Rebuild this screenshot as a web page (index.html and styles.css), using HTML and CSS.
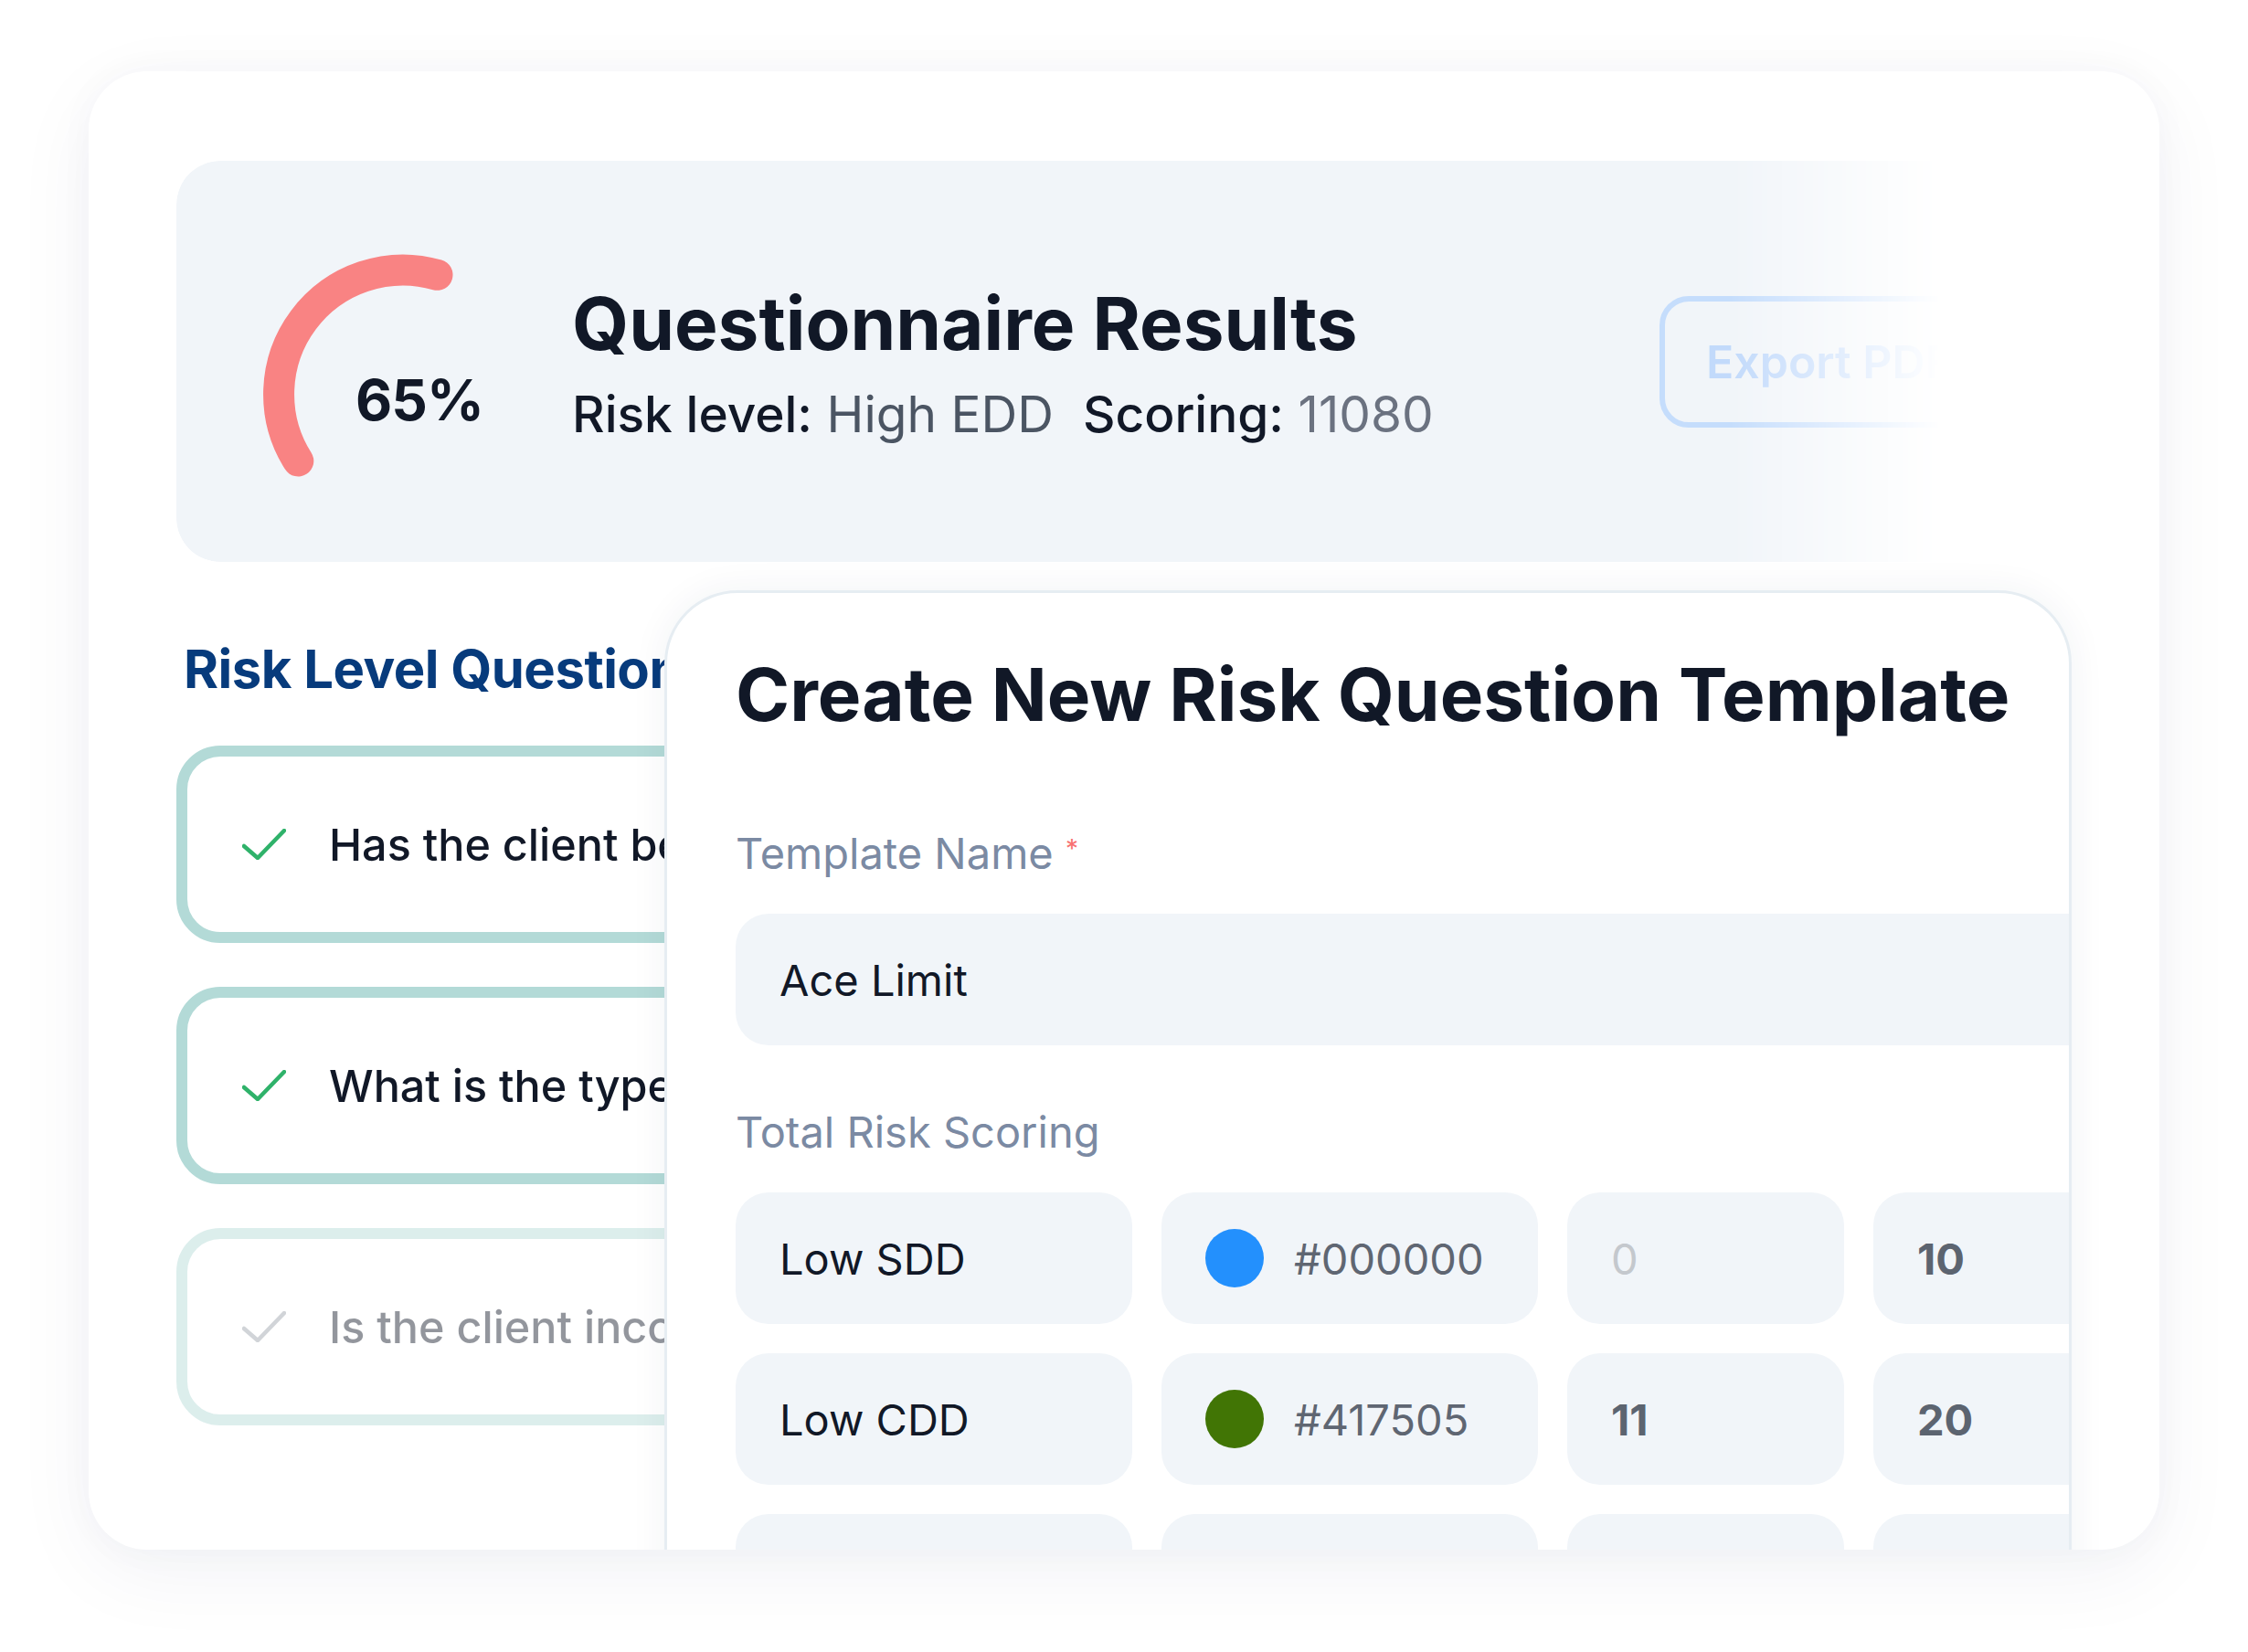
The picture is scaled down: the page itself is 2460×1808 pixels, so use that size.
FILE: index.html
```html
<!DOCTYPE html>
<html lang="en">
<head>
<meta charset="utf-8">
<title>Questionnaire Results</title>
<link rel="stylesheet" href="styles.css">
</head>
<body>
<div class="page">
  <div class="card">
    <section class="results">
      <div class="gauge">
        <svg class="gauge-svg" width="300" height="300" viewBox="0 0 300 300">
          <path d="M 37.3 258.5 A 136 136 0 0 1 189.5 54.8" fill="none" stroke="#f98383" stroke-width="34" stroke-linecap="round"/>
        </svg>
        <span class="gauge-value">65%</span>
      </div>
      <div class="summary">
        <h1 class="summary-title">Questionnaire Results</h1>
        <p class="summary-meta">
          <span class="meta-item"><span class="meta-key">Risk level:</span> <span class="meta-level">High EDD</span></span>
          <span class="meta-item"><span class="meta-key">Scoring:</span> <span class="meta-score">11080</span></span>
        </p>
      </div>
      <button class="export-btn" type="button">Export PDF</button>
    </section>

    <section class="body">
      <div class="questions">
        <h2 class="questions-title">Risk Level Questions</h2>
        <ul class="question-list">
          <li class="question">
            <svg class="check" width="48" height="34" viewBox="0 0 48 34"><polyline points="2,19 17,32 46,2" fill="none" stroke="#2fb26a" stroke-width="4.5" stroke-linecap="round" stroke-linejoin="round"/></svg>
            <span class="question-text">Has the client been subject to sanctions?</span>
          </li>
          <li class="question">
            <svg class="check" width="48" height="34" viewBox="0 0 48 34"><polyline points="2,19 17,32 46,2" fill="none" stroke="#2fb26a" stroke-width="4.5" stroke-linecap="round" stroke-linejoin="round"/></svg>
            <span class="question-text">What is the type of the client?</span>
          </li>
          <li class="question question-faded">
            <svg class="check" width="48" height="34" viewBox="0 0 48 34"><polyline points="2,19 17,32 46,2" fill="none" stroke="#9aa1a9" stroke-width="4.5" stroke-linecap="round" stroke-linejoin="round"/></svg>
            <span class="question-text">Is the client incorporated offshore?</span>
          </li>
        </ul>
      </div>

      <div class="modal">
        <h2 class="modal-title">Create New Risk Question Template</h2>
        <label class="field-label">Template Name <span class="required">*</span></label>
        <div class="text-input">Ace Limit</div>
        <div class="field-label field-label-spaced">Total Risk Scoring</div>
        <div class="score-grid">
          <div class="field">Low SDD</div>
          <div class="field field-color"><span class="swatch swatch-blue"></span><span class="hex">#000000</span></div>
          <div class="field field-placeholder">0</div>
          <div class="field field-num">10</div>

          <div class="field">Low CDD</div>
          <div class="field field-color"><span class="swatch swatch-green"></span><span class="hex">#417505</span></div>
          <div class="field field-num">11</div>
          <div class="field field-num">20</div>

          <div class="field">Medium CDD</div>
          <div class="field field-color"><span class="swatch swatch-orange"></span><span class="hex">#F5A623</span></div>
          <div class="field field-num">21</div>
          <div class="field field-num">30</div>
        </div>
      </div>
    </section>
  </div>
</div>
</body>
</html>
```

FILE: styles.css
```css
* {
  box-sizing: border-box;
}

html, body {
  margin: 0;
  padding: 0;
  background: #ffffff;
}

body {
  font-family: "Inter", "Noto Sans", sans-serif;
  color: #111827;
}

.page {
  padding: 78px 97px 0 97px;
  height: 1808px;
}

.card {
  height: 1618px;
  background: #ffffff;
  border-radius: 64px;
  overflow: hidden;
  padding: 98px 96px 0 96px;
  box-shadow: 0 24px 90px rgba(20, 40, 90, 0.055), 0 0 40px rgba(20, 40, 90, 0.03);
}

/* ---------- results panel ---------- */
.results {
  display: flex;
  align-items: center;
  height: 439px;
  padding: 0 71px 0 96px;
  background: #f1f5f9;
  border-radius: 48px;
  -webkit-mask-image: linear-gradient(90deg, #000 1700px, transparent 1930px);
  mask-image: linear-gradient(90deg, #000 1700px, transparent 1930px);
}

.gauge {
  position: relative;
  flex: none;
  width: 300px;
  height: 300px;
  margin-right: 37px;
}

.gauge-svg {
  display: block;
  overflow: visible;
}

.gauge-value {
  position: absolute;
  left: 100px;
  top: 160px;
  font-size: 62px;
  line-height: 64px;
  font-weight: 700;
  letter-spacing: -1px;
  color: #111827;
}

.summary {
  flex: none;
}

.summary-title {
  margin: 0;
  font-size: 80px;
  line-height: 97px;
  font-weight: 700;
  color: #111827;
}

.summary-meta {
  margin: 18px 0 0 0;
  display: flex;
  gap: 32px;
  font-size: 55px;
  line-height: 66px;
  white-space: nowrap;
}

.meta-key {
  font-weight: 500;
  color: #111827;
}

.meta-level {
  font-weight: 400;
  color: #4b5563;
}

.meta-score {
  font-weight: 400;
  color: #6b7280;
}

.export-btn {
  flex: none;
  margin-left: auto;
  width: 380px;
  height: 144px;
  padding: 0 0 0 45px;
  text-align: left;
  border: 6px solid #c5ddfc;
  border-radius: 32px;
  background: transparent;
  font-family: "Inter", "Noto Sans", sans-serif;
  font-size: 50px;
  font-weight: 600;
  color: #c2dafb;
}

/* ---------- body ---------- */
.body {
  position: relative;
  padding-top: 82px;
}

.questions-title {
  margin: 0 0 48px 0;
  padding-left: 8px;
  font-size: 58px;
  line-height: 71px;
  font-weight: 700;
  letter-spacing: -0.5px;
  color: #073b7c;
  white-space: nowrap;
}

.question-list {
  list-style: none;
  margin: 0;
  padding: 0;
  display: flex;
  flex-direction: column;
  gap: 48px;
}

.question {
  display: flex;
  align-items: center;
  gap: 47px;
  width: 1300px;
  height: 216px;
  padding-left: 60px;
  border: 12px solid #b3dad7;
  border-radius: 48px;
  background: #ffffff;
}

.question-faded {
  opacity: 0.45;
}

.check {
  flex: none;
  display: block;
}

.question-text {
  font-size: 48.5px;
  font-weight: 500;
  color: #111827;
  white-space: nowrap;
}

/* ---------- modal ---------- */
.modal {
  position: absolute;
  top: 31px;
  left: 534px;
  right: 0;
  height: 1200px;
  background: #ffffff;
  border: 3px solid #e6edf2;
  border-radius: 80px;
  overflow: hidden;
  padding: 63px 0 0 75px;
  box-shadow: 0 0 40px rgba(20, 50, 90, 0.06);
}

.modal-title {
  margin: 0;
  font-size: 80px;
  line-height: 96px;
  font-weight: 700;
  color: #111827;
  white-space: nowrap;
}

.field-label {
  display: block;
  margin: 93px 0 38px 0;
  font-size: 47px;
  line-height: 56px;
  font-weight: 400;
  color: #7b8aa3;
}

.field-label-spaced {
  margin-top: 67px;
}

.required {
  color: #f87171;
  font-size: 28px;
  vertical-align: 12px;
}

.text-input {
  display: flex;
  align-items: center;
  width: 1700px;
  height: 144px;
  padding-left: 48px;
  background: #f1f5f9;
  border-radius: 36px;
  font-size: 47px;
  color: #111827;
}

.score-grid {
  display: grid;
  grid-template-columns: 434px 412px 303px 303px;
  grid-auto-rows: 144px;
  gap: 32px;
}

.field {
  display: flex;
  align-items: center;
  padding-left: 48px;
  background: #f1f5f9;
  border-radius: 36px;
  font-size: 47px;
  color: #111827;
  white-space: nowrap;
}

.field-color {
  gap: 33px;
  padding-left: 48px;
}

.swatch {
  flex: none;
  width: 64px;
  height: 64px;
  border-radius: 50%;
}

.swatch-blue {
  background: #2390fd;
}

.swatch-green {
  background: #417505;
}

.swatch-orange {
  background: #f5a623;
}

.hex {
  color: #5f6672;
}

.field-placeholder {
  color: #c4c8cd;
}

.field-num {
  font-weight: 700;
  color: #5c6470;
}
```
